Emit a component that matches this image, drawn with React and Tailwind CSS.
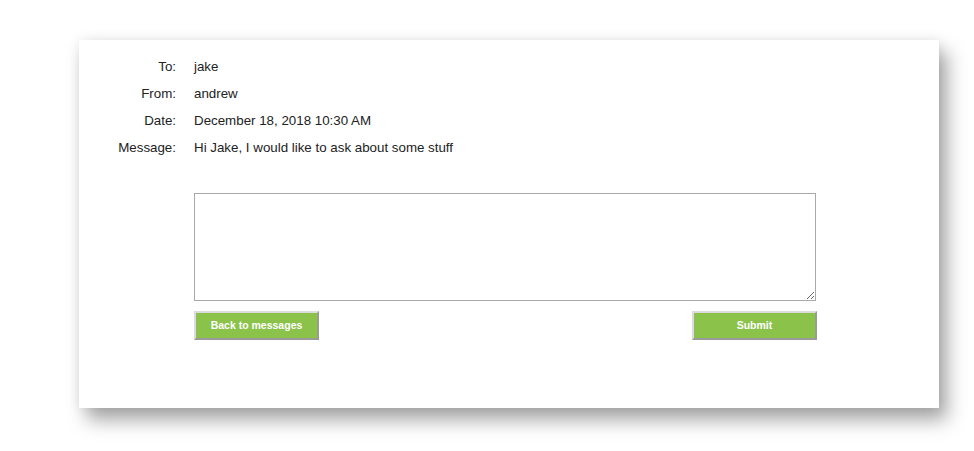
import React from 'react';

const rows = [
  { label: 'To:', value: 'jake' },
  { label: 'From:', value: 'andrew' },
  { label: 'Date:', value: 'December 18, 2018 10:30 AM' },
  { label: 'Message:', value: 'Hi Jake, I would like to ask about some stuff' },
];

function GreenButton({ children }) {
  return (
    <button
      type="button"
      className="w-[125px] h-[29px] pt-px bg-[#8bc34a] text-white text-[10.5px] font-bold border-2 border-t-[#dcdcdc] border-l-[#dcdcdc] border-b-[#9a9a9a] border-r-[#9a9a9a]"
    >
      {children}
    </button>
  );
}

export default function App() {
  return (
    <div className="min-h-screen bg-white pt-[40px] pl-[79px] font-['Liberation_Sans',Arial,sans-serif]">
      <div className="w-[860px] h-[368px] bg-white shadow-[8px_12px_18px_rgba(0,0,0,0.35),0_0_12px_rgba(0,0,0,0.08)] pt-[13px]">
        <div className="flex flex-col">
          {rows.map((row) => (
            <div key={row.label} className="flex h-[27px] items-center text-[13.33px] text-[#222]">
              <div className="w-[97px] text-right">{row.label}</div>
              <div className="ml-[18px]">{row.value}</div>
            </div>
          ))}
        </div>
        <div className="ml-[115px] mt-[32px] w-[623px]">
          <textarea className="block w-[622px] h-[108px] border border-[#a9a9a9] bg-white resize" />
          <div className="flex justify-between mt-[10px]">
            <GreenButton>Back to messages</GreenButton>
            <GreenButton>Submit</GreenButton>
          </div>
        </div>
      </div>
    </div>
  );
}
